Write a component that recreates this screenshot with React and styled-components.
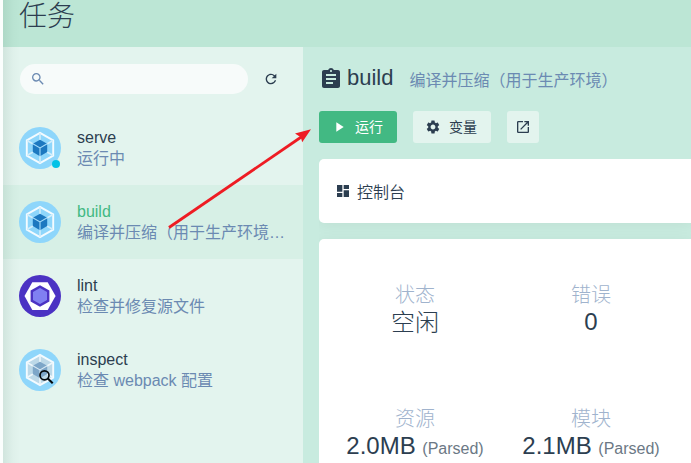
import React from 'react';
import styled, { createGlobalStyle, css } from 'styled-components';
import {
  MdSearch,
  MdRefresh,
  MdAssignment,
  MdPlayArrow,
  MdSettings,
  MdOpenInNew,
  MdDashboard,
} from 'react-icons/md';

const ink = '#2c3e50';
const accent = '#6b8ab2';
const green = '#42b983';

const GlobalStyle = createGlobalStyle`
  * { box-sizing: border-box; }
  body {
    margin: 0;
    overflow: hidden;
    color: ${ink};
    font-family: "Liberation Sans", "Noto Sans CJK SC", sans-serif;
    font-size: 16px;
    font-weight: 350;
  }
  svg { display: block; flex: none; }
`;

const Page = styled.div`
  position: relative;
  height: 463px;
  padding-left: 3px;
  overflow: hidden;
  background: #fbfefd;
`;

const Frame = styled.div`
  display: flex;
  flex-direction: column;
  height: 100%;
`;

const EdgeShade = styled.div`
  position: absolute;
  left: 3px;
  top: 0;
  bottom: 0;
  width: 17px;
  background: linear-gradient(to right, rgba(20, 70, 50, 0.085), rgba(20, 70, 50, 0.02) 60%, transparent);
`;

const Header = styled.header`
  flex: none;
  height: 47px;
  padding-left: 16px;
  background: #bce6d5;
  font-size: 28px;
  font-weight: 300;
  line-height: 33px;
`;

const Body = styled.div`
  flex: 1;
  display: flex;
  min-height: 0;
`;

const Sidebar = styled.aside`
  flex: none;
  width: 300px;
  background: #e3f4ee;
`;

const SearchRow = styled.div`
  display: flex;
  align-items: center;
  gap: 15px;
  height: 64px;
  padding-left: 17px;
`;

const SearchField = styled.div`
  display: flex;
  align-items: center;
  width: 228px;
  height: 30px;
  padding-left: 10px;
  border-radius: 15px;
  background: #f7fbfa;
  color: ${accent};
`;

const TaskRow = styled.div`
  display: flex;
  align-items: center;
  gap: 16px;
  height: 74px;
  padding: 0 12px 0 16px;
  background: ${(p) => (p.$selected ? '#d7f0e6' : 'transparent')};
`;

const TaskIcon = styled.div`
  position: relative;
  flex: none;
  width: 42px;
  height: 42px;
`;

const RunningDot = styled.span`
  position: absolute;
  right: 1px;
  bottom: 1px;
  width: 8px;
  height: 8px;
  border-radius: 50%;
  background: #03c2e6;
`;

const TaskText = styled.div`
  min-width: 0;
  line-height: 21px;
`;

const TaskName = styled.div`
  color: ${(p) => (p.$selected ? green : ink)};
`;

const TaskDescription = styled.div`
  overflow: hidden;
  white-space: nowrap;
  color: ${accent};
  font-weight: 400;
`;

const Main = styled.main`
  flex: 1;
  min-width: 0;
  display: flex;
  flex-direction: column;
  padding: 16px 0 0 16px;
  background: #c8ebdf;
`;

const TitleRow = styled.div`
  display: flex;
  align-items: center;
  height: 32px;
`;

const Title = styled.h1`
  margin: 0 16px 2px 4px;
  font-size: 22px;
  font-weight: 300;
  line-height: 28px;
`;

const Subtitle = styled.span`
  padding-top: 4px;
  color: ${accent};
  font-weight: 400;
  line-height: 20px;
`;

const Toolbar = styled.div`
  display: flex;
  gap: 16px;
  margin: 16px 0;
`;

const Button = styled.button`
  display: flex;
  align-items: center;
  gap: 8px;
  width: 78px;
  height: 32px;
  padding: 0 0 0 12px;
  border: 0;
  border-radius: 3px;
  background: #e3f4ee;
  color: ${ink};
  font: inherit;
  font-size: 14px;
  font-weight: 400;
  ${(p) => p.$primary && css`
    background: ${green};
    color: #fff;
  `}
  ${(p) => p.$square && css`
    width: 32px;
    padding-left: 8px;
  `}
`;

const ButtonLabel = styled.span`
  margin-bottom: 2px;
`;

const Cards = styled.div`
  flex: 1;
  display: flex;
  flex-direction: column;
  gap: 16px;
  overflow: hidden;
`;

const Card = styled.section`
  border-radius: 5px 0 0 5px;
  background: #fff;
  box-shadow: 0 2px 14px rgba(0, 0, 0, 0.05);
`;

const ViewCard = styled(Card)`
  display: flex;
  align-items: center;
  gap: 6px;
  flex: none;
  height: 64px;
  padding-left: 16px;
`;

const MetricsCard = styled(Card)`
  display: grid;
  grid-template-columns: 176px 176px;
  grid-auto-rows: 124px;
  flex: 1;
  border-bottom-left-radius: 0;
  padding: 42px 0 0 8px;
`;

const Metric = styled.div`
  text-align: center;
  white-space: nowrap;
  font-weight: 300;
`;

const MetricLabel = styled.div`
  color: #a0b3cd;
  font-size: 20px;
  line-height: 28px;
`;

const MetricValue = styled.div`
  font-size: 24px;
  line-height: ${(p) => (p.$numeric ? 26 : 28)}px;
`;

const MetricUnit = styled.span`
  color: #6b7885;
  font-size: 16px;
  line-height: 1;
`;

function WebpackIcon({ muted }) {
  const face = muted ? '#bdd9e8' : '#8ed6fb';
  const line = '#f4fbff';
  return (
    <svg width="42" height="42" viewBox="0 0 42 42">
      <circle cx="21" cy="21" r="21" fill="#8ed6fb" />
      <path d="M21 5.8 34.2 13.3V28.7L21 36.2 7.8 28.7V13.3Z" fill={face} stroke={line} strokeWidth="1.9" />
      <path
        d="M21 6v7M21 29v7M8 13.5l6 3.5M28 25l6 3.5M34 13.5 28 17M14 25l-6 3.5"
        fill="none"
        stroke={muted ? '#eef7fb' : '#d2eefc'}
        strokeWidth="1.5"
      />
      <path d="M21 12.7 28.2 16.7V25L21 29.2 13.8 25V16.7Z" fill={muted ? '#7da6c8' : '#1c78c0'} />
      <path d="M13.8 16.8 21 20.9 28.2 16.8M21 20.9V29.2" fill="none" stroke={muted ? '#d8e9f3' : '#a5dcfa'} strokeWidth="1.1" />
      {muted && (
        <g fill="none" stroke="#05090c">
          <circle cx="25.5" cy="26.3" r="4.5" strokeWidth="1.7" />
          <path d="m28.8 29.5 4.9 4.7" strokeWidth="2.1" />
        </g>
      )}
    </svg>
  );
}

function EslintIcon() {
  return (
    <svg width="42" height="42" viewBox="0 0 42 42">
      <circle cx="21" cy="21" r="21" fill="#4b32c3" />
      <path d="M13.3 7.2h15.4L36.6 21l-7.9 14H13.3L5.5 21Z" fill="#fff" />
      <path d="M21 10.3 30.4 15.6V26.4L21 31.8 11.6 26.4V15.6Z" fill="#4b32c3" />
      <path d="M21 13 28 17V25L21 29 14 25V17Z" fill="#8080f2" />
    </svg>
  );
}

const Pointer = styled.svg`
  position: absolute;
  left: 160px;
  top: 120px;
`;

const tasks = [
  { name: 'serve', description: '运行中', icon: <WebpackIcon />, running: true },
  { name: 'build', description: '编译并压缩（用于生产环境…', icon: <WebpackIcon />, selected: true },
  { name: 'lint', description: '检查并修复源文件', icon: <EslintIcon /> },
  { name: 'inspect', description: '检查 webpack 配置', icon: <WebpackIcon muted /> },
];

const metrics = [
  { label: '状态', value: '空闲' },
  { label: '错误', value: '0', numeric: true },
  { label: '资源', value: '2.0MB', unit: '(Parsed)', numeric: true },
  { label: '模块', value: '2.1MB', unit: '(Parsed)', numeric: true },
];

export default function App() {
  return (
    <Page>
      <GlobalStyle />
      <Frame>
        <Header>任务</Header>
        <Body>
          <Sidebar>
            <SearchRow>
              <SearchField><MdSearch size={16} /></SearchField>
              <MdRefresh size={16} />
            </SearchRow>
            {tasks.map((t) => (
              <TaskRow key={t.name} $selected={t.selected}>
                <TaskIcon>
                  {t.icon}
                  {t.running && <RunningDot />}
                </TaskIcon>
                <TaskText>
                  <TaskName $selected={t.selected}>{t.name}</TaskName>
                  <TaskDescription>{t.description}</TaskDescription>
                </TaskText>
              </TaskRow>
            ))}
          </Sidebar>
          <Main>
            <TitleRow>
              <MdAssignment size={24} />
              <Title>build</Title>
              <Subtitle>编译并压缩（用于生产环境）</Subtitle>
            </TitleRow>
            <Toolbar>
              <Button $primary><MdPlayArrow size={16} /><ButtonLabel>运行</ButtonLabel></Button>
              <Button><MdSettings size={16} /><ButtonLabel>变量</ButtonLabel></Button>
              <Button $square><MdOpenInNew size={16} /></Button>
            </Toolbar>
            <Cards>
              <ViewCard><MdDashboard size={16} />控制台</ViewCard>
              <MetricsCard>
                {metrics.map((m) => (
                  <Metric key={m.label}>
                    <MetricLabel>{m.label}</MetricLabel>
                    <MetricValue $numeric={m.numeric}>
                      {m.value}
                      {m.unit && <> <MetricUnit>{m.unit}</MetricUnit></>}
                    </MetricValue>
                  </Metric>
                ))}
              </MetricsCard>
            </Cards>
          </Main>
        </Body>
      </Frame>
      <EdgeShade />
      <Pointer width="160" height="120" viewBox="0 0 160 120">
        <path d="M9 107.5 142 16.5" stroke="#ee1c23" strokeWidth="2.8" fill="none" />
        <path d="M151 9.3 142.2 22.3 140.8 17.3 135 13.5Z" fill="#ee1c23" />
      </Pointer>
    </Page>
  );
}
